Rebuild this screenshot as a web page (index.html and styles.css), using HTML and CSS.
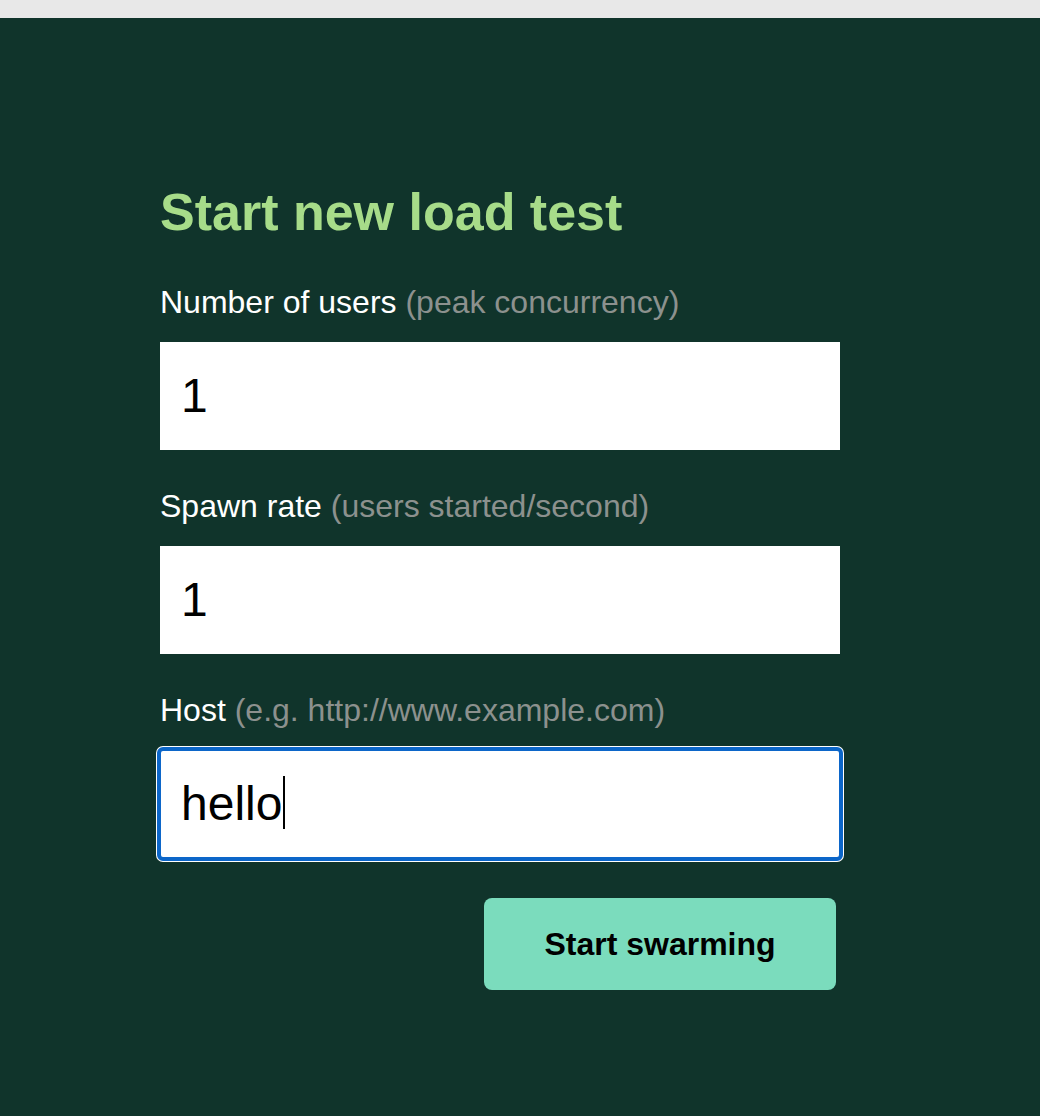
FILE: index.html
```html
<!DOCTYPE html>
<html lang="en">
<head>
<meta charset="utf-8">
<title>Start new load test</title>
<link rel="stylesheet" href="styles.css">
</head>
<body>
<div class="topbar"></div>
<main class="page">
  <form class="form">
    <h1 class="title">Start new load test</h1>
    <div class="group">
      <label class="label">Number of users <span class="hint">(peak concurrency)</span></label>
      <div class="field">1</div>
    </div>
    <div class="group">
      <label class="label">Spawn rate <span class="hint">(users started/second)</span></label>
      <div class="field">1</div>
    </div>
    <div class="group">
      <label class="label">Host <span class="hint">(e.g. http://www.example.com)</span></label>
      <div class="field focused">hello<span class="caret"></span></div>
    </div>
    <div class="actions">
      <button type="button" class="btn">Start swarming</button>
    </div>
  </form>
</main>
</body>
</html>
```

FILE: styles.css
```css
html, body {
  margin: 0;
  padding: 0;
}
body {
  background: #10342b;
  font-family: "Liberation Sans", Arial, sans-serif;
  min-height: 1116px;
}
.topbar {
  height: 18px;
  background: #e8e8e8;
}
.page {
  padding: 164px 0 0 160px;
}
.form {
  width: 680px;
  display: flex;
  flex-direction: column;
}
.title {
  margin: 0;
  font-size: 52px;
  line-height: 60px;
  font-weight: bold;
  color: #a7dc89;
}
.group {
  display: flex;
  flex-direction: column;
  gap: 20px;
  margin-top: 40px;
}
.group + .group {
  margin-top: 36px;
}
.label {
  font-size: 32px;
  line-height: 40px;
  color: #ffffff;
}
.hint {
  color: #8c918e;
}
.field {
  height: 108px;
  line-height: 108px;
  background: #ffffff;
  color: #000000;
  font-size: 48px;
  padding: 0 20px 0 21px;
  box-sizing: border-box;
}
.field.focused {
  border-radius: 3px;
  outline: 4px solid #0c66c9;
  outline-offset: -1px;
  box-shadow: 0 0 0 4px #ffffff;
}
.caret {
  display: inline-block;
  width: 2px;
  height: 53px;
  background: #000000;
  vertical-align: -9px;
  margin-left: 1px;
}
.actions {
  display: flex;
  justify-content: flex-end;
  margin-top: 40px;
  padding-right: 4px;
}
.btn {
  width: 352px;
  height: 92px;
  border: none;
  border-radius: 8px;
  background: #7bdcbd;
  color: #000000;
  font-family: "Liberation Sans", Arial, sans-serif;
  font-size: 32px;
  font-weight: bold;
  cursor: pointer;
}
```
